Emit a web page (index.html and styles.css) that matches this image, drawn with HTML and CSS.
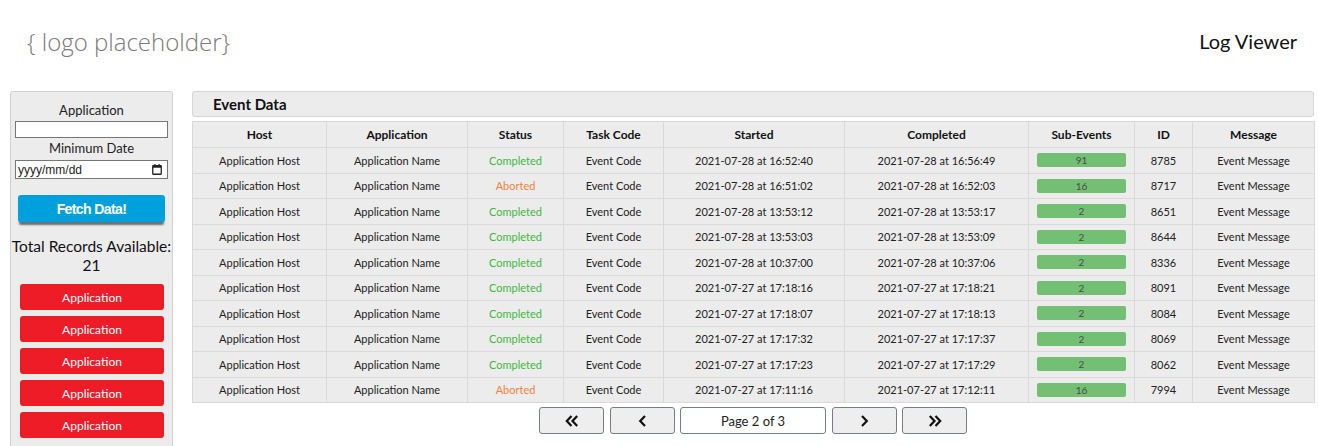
FILE: index.html
```html
<!DOCTYPE html>
<html lang="en">
<head>
<meta charset="utf-8">
<title>Log Viewer</title>
<link rel="stylesheet" href="styles.css">
</head>
<body>
<header class="topbar">
  <div class="logo">{ logo placeholder}</div>
  <div class="app-title">Log Viewer</div>
</header>
<div class="layout">
  <aside class="sidebar">
    <label class="field-label">Application</label>
    <div class="text-input"></div>
    <label class="field-label">Minimum Date</label>
    <div class="date-input">
      <span class="date-placeholder">yyyy/mm/dd</span>
      <svg class="cal-icon" width="10" height="11" viewBox="0 0 10 11"><rect x="0.75" y="1.75" width="8.5" height="8.5" fill="none" stroke="#222" stroke-width="1.3" rx="0.5"/><rect x="0.75" y="1.75" width="8.5" height="2" fill="#222"/><rect x="2.3" y="0" width="1.2" height="2" fill="#222"/><rect x="6.5" y="0" width="1.2" height="2" fill="#222"/></svg>
    </div>
    <button class="fetch-btn">Fetch Data!</button>
    <div class="total">Total Records Available:<br>21</div>
    <div class="app-list">
      <button class="app-btn">Application</button>
      <button class="app-btn">Application</button>
      <button class="app-btn">Application</button>
      <button class="app-btn">Application</button>
      <button class="app-btn">Application</button>
    </div>
  </aside>
  <main class="content">
    <div class="panel-title">Event Data</div>
    <table class="events">
      <colgroup>
        <col class="c-host"><col class="c-app"><col class="c-status"><col class="c-task"><col class="c-start"><col class="c-end"><col class="c-sub"><col class="c-id"><col class="c-msg">
      </colgroup>
      <thead>
        <tr><th>Host</th><th>Application</th><th>Status</th><th>Task Code</th><th>Started</th><th>Completed</th><th>Sub-Events</th><th>ID</th><th>Message</th></tr>
      </thead>
      <tbody>
        <tr><td>Application Host</td><td>Application Name</td><td class="ok">Completed</td><td>Event Code</td><td>2021-07-28 at 16:52:40</td><td>2021-07-28 at 16:56:49</td><td><div class="bar">91</div></td><td>8785</td><td>Event Message</td></tr>
        <tr><td>Application Host</td><td>Application Name</td><td class="ab">Aborted</td><td>Event Code</td><td>2021-07-28 at 16:51:02</td><td>2021-07-28 at 16:52:03</td><td><div class="bar">16</div></td><td>8717</td><td>Event Message</td></tr>
        <tr><td>Application Host</td><td>Application Name</td><td class="ok">Completed</td><td>Event Code</td><td>2021-07-28 at 13:53:12</td><td>2021-07-28 at 13:53:17</td><td><div class="bar">2</div></td><td>8651</td><td>Event Message</td></tr>
        <tr><td>Application Host</td><td>Application Name</td><td class="ok">Completed</td><td>Event Code</td><td>2021-07-28 at 13:53:03</td><td>2021-07-28 at 13:53:09</td><td><div class="bar">2</div></td><td>8644</td><td>Event Message</td></tr>
        <tr><td>Application Host</td><td>Application Name</td><td class="ok">Completed</td><td>Event Code</td><td>2021-07-28 at 10:37:00</td><td>2021-07-28 at 10:37:06</td><td><div class="bar">2</div></td><td>8336</td><td>Event Message</td></tr>
        <tr><td>Application Host</td><td>Application Name</td><td class="ok">Completed</td><td>Event Code</td><td>2021-07-27 at 17:18:16</td><td>2021-07-27 at 17:18:21</td><td><div class="bar">2</div></td><td>8091</td><td>Event Message</td></tr>
        <tr><td>Application Host</td><td>Application Name</td><td class="ok">Completed</td><td>Event Code</td><td>2021-07-27 at 17:18:07</td><td>2021-07-27 at 17:18:13</td><td><div class="bar">2</div></td><td>8084</td><td>Event Message</td></tr>
        <tr><td>Application Host</td><td>Application Name</td><td class="ok">Completed</td><td>Event Code</td><td>2021-07-27 at 17:17:32</td><td>2021-07-27 at 17:17:37</td><td><div class="bar">2</div></td><td>8069</td><td>Event Message</td></tr>
        <tr><td>Application Host</td><td>Application Name</td><td class="ok">Completed</td><td>Event Code</td><td>2021-07-27 at 17:17:23</td><td>2021-07-27 at 17:17:29</td><td><div class="bar">2</div></td><td>8062</td><td>Event Message</td></tr>
        <tr><td>Application Host</td><td>Application Name</td><td class="ab">Aborted</td><td>Event Code</td><td>2021-07-27 at 17:11:16</td><td>2021-07-27 at 17:12:11</td><td><div class="bar">16</div></td><td>7994</td><td>Event Message</td></tr>
      </tbody>
    </table>
    <nav class="pager">
      <button class="pg-btn"><svg width="14" height="12" viewBox="0 0 14 12"><path d="M6.5 1 L1.8 6 L6.5 11 M12.2 1 L7.5 6 L12.2 11" fill="none" stroke="#111" stroke-width="2.2"/></svg></button>
      <button class="pg-btn"><svg width="9" height="12" viewBox="0 0 9 12"><path d="M7 1 L2.2 6 L7 11" fill="none" stroke="#111" stroke-width="2.2"/></svg></button>
      <div class="pg-label">Page 2 of 3</div>
      <button class="pg-btn"><svg width="9" height="12" viewBox="0 0 9 12"><path d="M2 1 L6.8 6 L2 11" fill="none" stroke="#111" stroke-width="2.2"/></svg></button>
      <button class="pg-btn"><svg width="14" height="12" viewBox="0 0 14 12"><path d="M1.8 1 L6.5 6 L1.8 11 M7.5 1 L12.2 6 L7.5 11" fill="none" stroke="#111" stroke-width="2.2"/></svg></button>
    </nav>
  </main>
</div>
</body>
</html>
```
FILE: styles.css
```css
html, body {
  margin: 0;
  padding: 0;
  height: 100%;
  overflow: hidden;
  background: #ffffff;
}
body {
  font-family: Lato, "Liberation Sans", sans-serif;
  color: #222;
}
.topbar {
  height: 82px;
  display: flex;
  align-items: center;
  justify-content: space-between;
  padding: 0 21px 0 27px;
  margin-bottom: 9px;
}
.logo {
  font-family: "Open Sans", sans-serif;
  font-weight: 300;
  font-size: 24px;
  color: #7a7a7a;
}
.app-title {
  font-family: Lato, sans-serif;
  font-size: 20px;
  color: #111;
}
.layout {
  display: flex;
  align-items: flex-start;
  gap: 19px;
  padding: 0 4px 0 10px;
}
.sidebar {
  width: 163px;
  flex: none;
  box-sizing: border-box;
  background: #ececec;
  border: 1px solid #d0d0d0;
  border-radius: 3px;
  padding: 8px 4px 40px 4px;
  display: flex;
  flex-direction: column;
  align-items: stretch;
  text-align: center;
}
.field-label {
  display: block;
  font-size: 13px;
  line-height: 20px;
  color: #222;
}
.text-input {
  height: 17px;
  box-sizing: border-box;
  border: 1px solid #767676;
  background: #fff;
  margin-top: 1px;
}
.date-input {
  height: 19px;
  box-sizing: border-box;
  border: 1px solid #767676;
  background: #fff;
  margin-top: 2px;
  display: flex;
  align-items: center;
  justify-content: space-between;
  padding: 0 5px 0 2px;
}
.date-placeholder {
  font-family: "Liberation Sans", Arial, sans-serif;
  font-size: 12px;
  color: #222;
}
.cal-icon {
  display: block;
}
.fetch-btn {
  margin: 16px 3px 0 3px;
  height: 27px;
  border: none;
  border-radius: 3px;
  background: #00a0dc;
  color: #fff;
  font-family: "Liberation Sans", Arial, sans-serif;
  font-weight: bold;
  font-size: 14px;
  letter-spacing: -0.6px;
  box-shadow: 0 4px 2px -1px #6e6e6e;
  padding: 0;
}
.total {
  margin: 15px -10px 0 -10px;
  font-size: 15.5px;
  line-height: 19px;
  color: #111;
  white-space: nowrap;
}
.app-list {
  margin-top: 9px;
  display: flex;
  flex-direction: column;
  align-items: center;
  gap: 6px;
}
.app-btn {
  width: 144px;
  height: 26px;
  border: none;
  border-radius: 3px;
  background: #ed1c27;
  color: #fff;
  font-family: Lato, sans-serif;
  font-size: 12px;
  padding: 0;
  margin-left: 1px;
}
.content {
  width: 1122px;
  flex: none;
}
.panel-title {
  height: 26px;
  box-sizing: border-box;
  background: #ececec;
  border: 1px solid #d6d6d6;
  border-radius: 3px;
  padding-left: 20px;
  font-weight: bold;
  font-size: 15px;
  line-height: 24px;
  color: #111;
}
.events {
  margin-top: 4px;
  width: 1122px;
  table-layout: fixed;
  border-collapse: collapse;
  background: #ececec;
  border: 1px solid #d9d9d9;
}
.c-host { width: 134px; }
.c-app { width: 141px; }
.c-status { width: 96px; }
.c-task { width: 100px; }
.c-start { width: 181px; }
.c-end { width: 184px; }
.c-sub { width: 106px; }
.c-id { width: 58px; }
.c-msg { width: 122px; }
.events th,
.events td {
  border: 1px solid #d9d9d9;
  text-align: center;
  padding: 0;
}
.events th {
  height: 25px;
  font-size: 12px;
  font-weight: bold;
  color: #111;
}
.events td {
  height: 24.5px;
  font-size: 11px;
  color: #222;
}
.events td.ok { color: #3db83d; }
.events td.ab { color: #f3823f; }
.bar {
  margin: 0 8px 0 8px;
  height: 14px;
  border-radius: 2px;
  background: #73bf73;
  color: #4a4a4a;
  font-size: 10px;
  line-height: 14px;
}
.pager {
  margin-top: 4px;
  display: flex;
  justify-content: center;
  gap: 5.5px;
}
.pg-btn,
.pg-label {
  height: 27px;
  box-sizing: border-box;
  border: 1px solid #777d85;
  border-radius: 3px;
  display: flex;
  align-items: center;
  justify-content: center;
}
.pg-btn {
  width: 65px;
  background: #eeeeee;
  padding: 0;
}
.pg-label {
  width: 146px;
  background: #fff;
  font-size: 13px;
  color: #222;
}
```
